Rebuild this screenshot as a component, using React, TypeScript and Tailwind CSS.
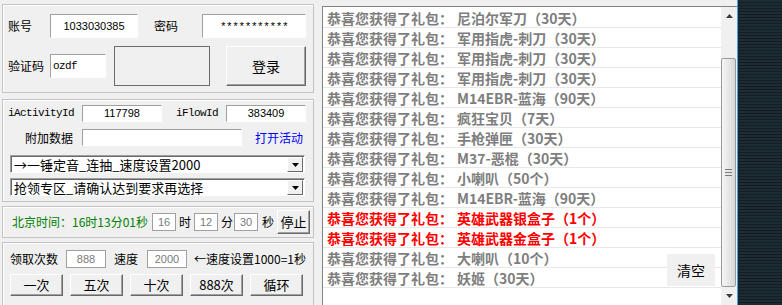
import React from "react";

const sunken =
  "border border-t-[#a0a0a0] border-l-[#a0a0a0] border-r-white border-b-white bg-white";
const raised =
  "border border-t-white border-l-white border-r-[#696969] border-b-[#696969] shadow-[inset_-1px_-1px_0_#a0a0a0] bg-[#f0f0f0] flex items-center justify-center";
const group = "w-[312px] border border-[#c3c3c3] shadow-[inset_1px_1px_0_#ffffff]";
const grayBox =
  "border border-[#a0a0a0] bg-white flex items-center justify-center text-[11px] text-[#7a7a7a] font-['Liberation_Sans',sans-serif]";

const gifts: [string, boolean][] = [
  ["尼泊尔军刀（30天）", false],
  ["军用指虎-刺刀（30天）", false],
  ["军用指虎-刺刀（30天）", false],
  ["军用指虎-刺刀（30天）", false],
  ["M14EBR-蓝海（90天）", false],
  ["疯狂宝贝（7天）", false],
  ["手枪弹匣（30天）", false],
  ["M37-恶棍（30天）", false],
  ["小喇叭（50个）", false],
  ["M14EBR-蓝海（90天）", false],
  ["英雄武器银盒子（1个）", true],
  ["英雄武器金盒子（1个）", true],
  ["大喇叭（10个）", false],
  ["妖姬（30天）", false],
];

function Combo({ text }: { text: string }) {
  return (
    <div className="ml-[7px] w-[295px] h-[18px] flex items-center border border-t-[#a0a0a0] border-l-[#a0a0a0] border-r-white border-b-white shadow-[inset_1px_1px_0_#696969] bg-white">
      <span className="flex-1 pl-[3px] text-[13px] leading-none text-black whitespace-nowrap">{text}</span>
      <div className="w-[16px] h-[15px] mr-[1px] mt-[1px] border border-t-white border-l-white border-r-[#696969] border-b-[#696969] bg-[#f0f0f0] flex items-center justify-center">
        <svg width="7" height="4" viewBox="0 0 7 4">
          <path d="M0 0h7L3.5 4z" fill="#000" />
        </svg>
      </div>
    </div>
  );
}

export default function App() {
  return (
    <div className="flex w-[782px] h-[305px] overflow-hidden bg-[#f0f0f0] font-['Noto_Sans_CJK_SC',sans-serif] text-[12px] text-black">
      {/* left form */}
      <div className="w-[322px] shrink-0 pl-[2px] pt-[4px]">
        <div className={`${group} h-[89px] pt-[9px]`}>
          <div className="flex items-center h-[24px]">
            <span className="ml-[5px] w-[42px]">账号</span>
            <div className={`${sunken} w-[88px] h-[24px] flex items-center justify-center text-[11px] font-['Liberation_Sans',sans-serif]`}>
              1033030385
            </div>
            <span className="ml-[16px] w-[48px]">密码</span>
            <div className={`${sunken} w-[104px] h-[24px] flex items-center justify-center pt-[3px] text-[11px] font-['Liberation_Mono',monospace] tracking-[-0.4px]`}>
              ***********
            </div>
          </div>
          <div className="flex items-center mt-[8px] h-[40px]">
            <span className="ml-[5px] w-[42px]">验证码</span>
            <div className={`${sunken} w-[56px] h-[24px] flex items-center pl-[2px] text-[11px] font-['Liberation_Mono',monospace] tracking-[-0.6px]`}>
              ozdf
            </div>
            <div className="ml-[8px] w-[96px] h-[40px] border border-[#6b6b6b] bg-[#f0f0f0]" />
            <button className={`${raised} ml-[16px] w-[80px] h-[40px] text-[14px]`}>登录</button>
          </div>
        </div>

        <div className={`${group} h-[103px] mt-[6px] pt-[5px]`}>
          <div className="flex items-center h-[17px]">
            <span className="ml-[5px] w-[74px] text-[11px] font-['Liberation_Mono',monospace] tracking-[-0.6px]">iActivityId</span>
            <div className={`${sunken} w-[80px] h-[17px] flex items-center justify-center text-[11px] font-['Liberation_Sans',sans-serif]`}>
              117798
            </div>
            <span className="ml-[14px] w-[50px] text-[11px] font-['Liberation_Mono',monospace] tracking-[-0.6px]">iFlowId</span>
            <div className={`${sunken} w-[80px] h-[17px] flex items-center justify-center text-[11px] font-['Liberation_Sans',sans-serif]`}>
              383409
            </div>
          </div>
          <div className="flex items-center h-[17px] mt-[7px]">
            <span className="w-[79px] pr-[9px] text-right">附加数据</span>
            <div className={`${sunken} w-[160px] h-[17px]`} />
            <span className="ml-[13px] text-[#0000ff]">打开活动</span>
          </div>
          <div className="mt-[9px]">
            <Combo text="→一锤定音_连抽_速度设置2000" />
          </div>
          <div className="mt-[5px]">
            <Combo text="抢领专区_请确认达到要求再选择" />
          </div>
        </div>

        <div className={`${group} h-[32px] mt-[4px] flex items-center`}>
          <span className="ml-[9px] w-[140px] text-[#008000] whitespace-nowrap">北京时间：16时13分01秒</span>
          <div className={`${grayBox} w-[24px] h-[18px]`}>16</div>
          <span className="ml-[3px] w-[12px]">时</span>
          <div className={`${grayBox} ml-[3px] w-[24px] h-[18px]`}>12</div>
          <span className="ml-[3px] w-[12px]">分</span>
          <div className={`${grayBox} ml-[1px] w-[24px] h-[18px]`}>30</div>
          <span className="ml-[4px] w-[12px]">秒</span>
          <button className={`${raised} ml-[3px] w-[33px] h-[24px] text-[13px]`}>停止</button>
        </div>

        <div className={`${group} h-[80px] mt-[4px] pt-[7px]`}>
          <div className="flex items-center h-[18px]">
            <span className="ml-[7px] w-[56px]">领取次数</span>
            <div className={`${grayBox} w-[40px] h-[18px]`}>888</div>
            <span className="ml-[8px] w-[33px]">速度</span>
            <div className={`${grayBox} w-[40px] h-[18px]`}>2000</div>
            <span className="ml-[7px] whitespace-nowrap">←速度设置1000=1秒</span>
          </div>
          <div className="flex gap-[7px] ml-[7px] mt-[6px] h-[22px]">
            {["一次", "五次", "十次", "888次", "循环"].map((b) => (
              <button key={b} className={`${raised} w-[53px] h-[22px] text-[13px]`}>
                {b}
              </button>
            ))}
          </div>
        </div>
      </div>

      {/* gift log */}
      <div className="w-[415px] shrink-0 pt-[6px]">
        <div className="relative h-[299px] flex border-t border-l border-[#828282] bg-white">
          <div className="flex-1 pt-[1px]">
            {gifts.map(([name, hot], i) => (
              <div
                key={i}
                className={`h-[20px] border-b border-[#e8e8e8] pl-[4px] flex items-center whitespace-nowrap text-[14px] font-bold leading-none ${
                  hot ? "text-[#ff0000]" : "text-[#7e7e7e]"
                }`}
              >
                <span>恭喜您获得了礼包：</span>
                <span className="ml-[4px]">{name}</span>
              </div>
            ))}
          </div>
          <div className="w-[16px] flex flex-col bg-[#f0f0f0]">
            <div className="h-[17px] flex items-center justify-center pt-[1px]">
              <svg width="7" height="4" viewBox="0 0 7 4">
                <path d="M3.5 0L7 4H0z" fill="#3c3c3c" />
              </svg>
            </div>
            <div className="h-[34px]" />
            <div className="w-[15px] h-[229px] border border-[#9a9a9a] rounded-[2px] bg-[linear-gradient(to_right,#f6f6f6,#d8d8d8)] flex flex-col items-center justify-center gap-[2px]">
              <div className="w-[7px] h-[1px] bg-[#7a7a7a]" />
              <div className="w-[7px] h-[1px] bg-[#7a7a7a]" />
              <div className="w-[7px] h-[1px] bg-[#7a7a7a]" />
            </div>
            <div className="flex-1 flex items-center justify-center">
              <svg width="7" height="4" viewBox="0 0 7 4">
                <path d="M0 0h7L3.5 4z" fill="#3c3c3c" />
              </svg>
            </div>
          </div>
          <button className="absolute left-[344px] top-[247px] w-[48px] h-[32px] bg-[#f0f0f0] text-[14px] text-black">
            清空
          </button>
        </div>
      </div>

      <div className="w-[1px] shrink-0 bg-[#4a9fd8]" />
      <div className="w-[44px] shrink-0 bg-[repeating-linear-gradient(to_bottom,#1d2b33_0px,#1d2b33_2px,#121d24_2px,#121d24_3px)]" />
    </div>
  );
}
